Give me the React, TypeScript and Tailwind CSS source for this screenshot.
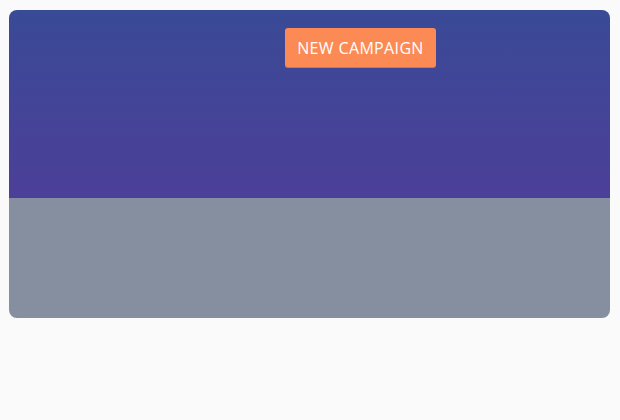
import React from "react";

const App = () => {
  return (
    <div className="min-h-screen w-full bg-[#fafafa] pt-[10px] pl-[9px] pr-[10px]">
      <div className="flex flex-col overflow-hidden rounded-lg">
        <div className="h-[188px] bg-gradient-to-b from-[#394a96] to-[#4c3f99] pt-[18px] pl-[276px]">
          <button
            className="h-[39px] w-[151px] rounded-[3px] bg-[#fc8a55] text-center text-[16px] tracking-[0.35px] text-white shadow-[0_1px_0_#e0704a]"
            style={{ fontFamily: '"Open Sans", sans-serif' }}
          >
            NEW CAMPAIGN
          </button>
        </div>
        <div className="h-[120px] bg-[#868fa0]" />
      </div>
    </div>
  );
};

export default App;
